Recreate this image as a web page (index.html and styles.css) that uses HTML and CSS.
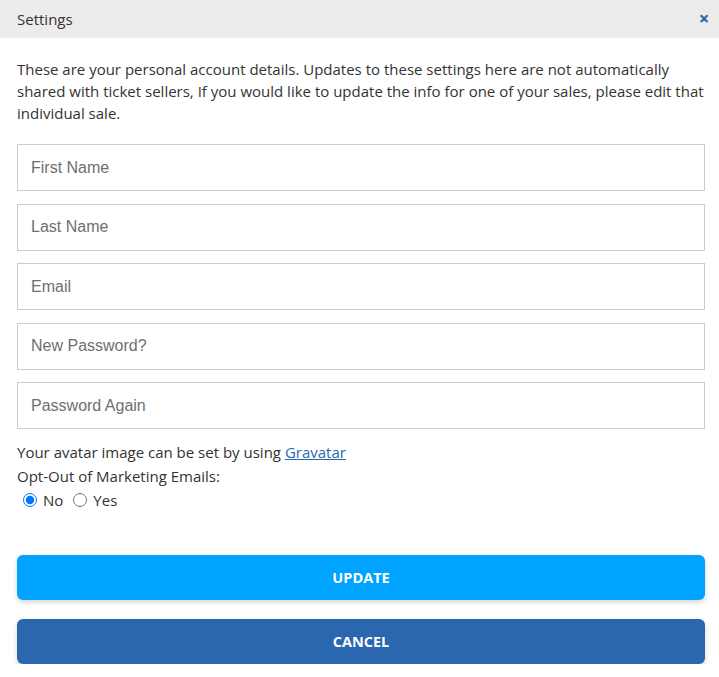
FILE: index.html
```html
<!DOCTYPE html>
<html lang="en">
<head>
<meta charset="utf-8">
<title>Settings</title>
<link rel="stylesheet" href="styles.css">
</head>
<body>
<div class="modal">
  <div class="modal-header">
    <span class="modal-title">Settings</span>
    <span class="close">&#x2715;</span>
  </div>
  <div class="modal-body">
    <p class="intro">These are your personal account details. Updates to these settings here are not automatically shared with ticket sellers, If you would like to update the info for one of your sales, please edit that individual sale.</p>
    <form class="form">
      <input class="field" type="text" placeholder="First Name">
      <input class="field" type="text" placeholder="Last Name">
      <input class="field" type="email" placeholder="Email">
      <input class="field" type="password" placeholder="New Password?">
      <input class="field" type="password" placeholder="Password Again">
      <div class="note first">Your avatar image can be set by using <a href="#">Gravatar</a></div>
      <div class="note">Opt-Out of Marketing Emails:</div>
      <div class="radios">
        <label class="radio"><input type="radio" name="optout" checked> No</label>
        <label class="radio"><input type="radio" name="optout"> Yes</label>
      </div>
      <div class="actions">
        <button type="button" class="btn btn-update">UPDATE</button>
        <button type="button" class="btn btn-cancel">CANCEL</button>
      </div>
    </form>
  </div>
</div>
</body>
</html>
```
FILE: styles.css
```css
* { box-sizing: border-box; }
html, body { margin: 0; padding: 0; background: #fff; }
body {
  font-family: "Open Sans", "Liberation Sans", sans-serif;
  color: #333;
  font-size: 15px;
}
.modal { width: 719px; }
.modal-header {
  height: 38px;
  background: #ececec;
  display: flex;
  align-items: center;
  justify-content: space-between;
  padding: 0 10px 0 17px;
}
.modal-title { font-size: 15px; color: #333; }
.close {
  color: #2b67ae;
  font-size: 12px;
  font-weight: 700;
  font-family: "DejaVu Sans", sans-serif;
  line-height: 1;
  -webkit-text-stroke: 0.8px #2b67ae;
}
.modal-body { padding: 20px 14px 0 17px; }
.intro {
  margin: 0 0 20px;
  font-size: 15px;
  line-height: 22px;
  color: #333;
}
.form { display: flex; flex-direction: column; }
.field {
  display: block;
  width: 100%;
  height: 47px;
  margin: 0 0 12.5px;
  border: 1px solid #ccc;
  border-radius: 0;
  padding: 0 13px;
  font-family: "Liberation Sans", Arial, sans-serif;
  font-size: 16px;
  color: #333;
  background: #fff;
  outline: none;
}
.field::placeholder { color: #6f6f6f; }
.note { font-size: 15px; line-height: 24px; color: #333; }
.note.first { margin-top: -2px; }
.note a { color: #2b67ae; text-decoration: underline; }
.radios { display: flex; gap: 10px; padding-left: 6px; line-height: 24px; font-size: 15px; }
.radio { display: flex; align-items: center; gap: 6px; }
.radio input { margin: 0; width: 14px; height: 14px; accent-color: #0075ff; }
.actions { display: flex; flex-direction: column; gap: 19px; margin-top: 43px; }
.btn {
  width: 100%;
  height: 45px;
  border: none;
  border-radius: 6px;
  color: #fff;
  font-family: "Open Sans", sans-serif;
  font-weight: 700;
  font-size: 14.5px;
  box-shadow: 0 2px 5px rgba(0,0,0,0.18);
}
.btn-update { background: #00a3ff; }
.btn-cancel { background: #2b67ae; }
```
